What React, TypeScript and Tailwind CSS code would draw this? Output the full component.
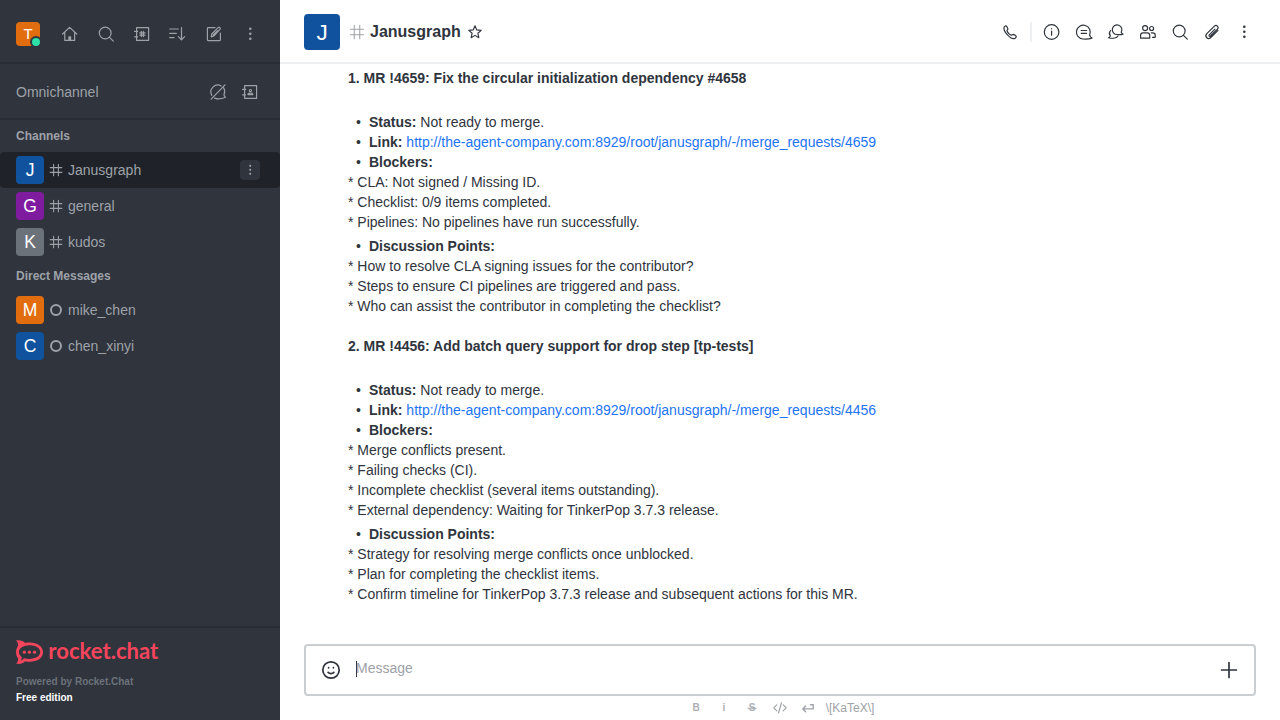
import type { ReactNode } from 'react';

type IconProps = { children: ReactNode; size?: string; sw?: number };

function Icon({ children, size = 'size-5', sw = 1.2 }: IconProps) {
  return (
    <svg viewBox="0 0 20 20" className={`${size} block shrink-0`} fill="none" stroke="currentColor" strokeWidth={sw} strokeLinecap="round" strokeLinejoin="round">
      {children}
    </svg>
  );
}

const Home = () => (
  <Icon>
    <path d="M2.6 10 9.6 3.4 16.8 10M4.8 8.2v8.2h9.8V8.2" />
    <path d="M8.9 16.2v-3.4h1.7v3.4z" fill="currentColor" />
  </Icon>
);
const Search = () => (
  <Icon>
    <circle cx="9.2" cy="9" r="5.9" />
    <path d="m13.5 13.3 3.8 3.8" />
  </Icon>
);
const Directory = () => (
  <Icon>
    <path d="M4.6 3.6h12v12.8h-12zM2.6 7.4h3M2.6 12.8h3" />
    <path d="M9.3 7.400v5.200M11.400 7.400v5.200M7.800 8.900h5.200M7.800 11.100h5.200" />
  </Icon>
);
const Sort = () => (
  <Icon>
    <path d="M1.7 5h8.6M1.7 9.4h6.6M1.7 13.6h4.4M13.5 3.6v12M10.4 12.7l3.1 3.1 3.1-3.1" />
  </Icon>
);
const Edit = () => (
  <Icon>
    <path d="M11 3.6H4.2a.8.8 0 0 0-.8.8v11.4c0 .4.4.8.8.8h11.4c.4 0 .8-.4.8-.8V9.2" />
    <path d="m7.2 12.9.6-2.9 6.3-6.3c.6-.6 1.3-.6 1.8-.1s.5 1.2 0 1.8L9.8 12zM9.2 11l4.4-4.4" />
  </Icon>
);
const Kebab = ({ size = 'size-5' }: { size?: string }) => (
  <svg viewBox="0 0 20 20" className={`${size} block shrink-0`} fill="currentColor">
    <circle cx="10.3" cy="4.8" r="1.3" />
    <circle cx="10.3" cy="9.8" r="1.3" />
    <circle cx="10.3" cy="14.8" r="1.3" />
  </svg>
);
const ChatOff = () => (
  <Icon>
    <path d="M13.200 4A6.900 6.900 0 0 0 3.800 13.400M15.600 5.800c1.400 2.200 1.400 4.600.4 7 .2 1.100.7 1.800 1.500 2.400-3.500 1.700-7.700 2.200-10.900.900M3.200 17.200 17 2.800" />
  </Icon>
);
const Contacts = () => (
  <Icon>
    <path d="M4.600 3.600h12v12.800h-12zM2.600 7.400h3M2.600 12.800h3" />
    <circle cx="10.400" cy="8.600" r="1.100" />
    <path d="M8 12.600v-.7c.4-1.100 4.400-1.100 4.800 0v.7z" />
  </Icon>
);
const Hash = ({ size, sw }: { size: string; sw: number }) => (
  <svg viewBox="0 0 14 14" className={`${size} block shrink-0`} fill="none" stroke="currentColor" strokeWidth={sw} strokeLinecap="round">
    <path d="M4.600 1.200v11.600M9.400 1.200v11.600M1.200 4.600h11.600M1.200 9.400h11.600" />
  </svg>
);
const Star = () => (
  <Icon size="size-4" sw={1.4}>
    <path d="m10 2.3 2.2 5.100 5.600.5-4.200 3.700 1.200 5.500-4.800-2.900-4.800 2.900 1.200-5.500-4.200-3.700 5.600-.5z" />
  </Icon>
);
const Phone = () => (
  <Icon>
    <path d="M4.100 5.100c.5-.8 1.400-1.500 2.100-1.200.8.500 1.400 1.800 1.700 2.900.2.800-.9 1.300-.9 1.900.3 1.600 2.600 4 4.200 4.500.7.100 1.300-1 2.100-.8 1.200.4 2.500 1.200 2.900 1.900.3.800-.8 2-1.700 2.300C10.400 17.500 2.800 9 4.100 5.100z" />
  </Icon>
);
const Info = () => (
  <Icon>
    <circle cx="9.600" cy="10" r="7.300" />
    <path d="M9.600 9v4.200M9.600 6.600v.2" />
  </Icon>
);
const Discussion = () => (
  <Icon>
    <path d="M15.600 13A6.900 6.900 0 1 0 9 17c3 .3 6.100.1 9-.9-1.200-.6-2-1.700-2.400-3.100zM7.200 8.500h5.400M7.200 11.300h5.400" />
  </Icon>
);
const Threads = () => (
  <Icon>
    <path d="M15.200 10.200a4.800 4.800 0 1 0-4.100 2.300c2 .3 4 .2 5.900-.4-.9-.4-1.500-1-1.800-1.900z" />
    <path d="M4.500 8.600c-1.300 1.600-1.300 3.800-.2 5.300-.4.900-.9 1.400-1.700 1.800 2.200.7 4.200.7 6.100.3 1.600-.3 2.700-1 3.300-2" />
  </Icon>
);
const Team = () => (
  <Icon>
    <circle cx="7.100" cy="6.100" r="2.500" />
    <circle cx="13.600" cy="6.500" r="2" />
    <path d="M2.600 16.200v-3c0-1.500.9-2.400 2.400-2.400h4.300c1.500 0 2.400.9 2.400 2.400v3zM13.300 10.800h1.400c1.400 0 2.500.9 2.500 2.200v2.300h-2.700" />
  </Icon>
);
const Clip = () => (
  <Icon>
    <path d="m12.900 7.200-5.600 5.600c-.9 1 .3 2.100 1.200 1.200l6.900-6.900c2-2.200-1-4.900-3-3L4.800 11.700c-2.600 2.900 1.200 6.500 4 3.800l7.200-7.200" />
  </Icon>
);
const Smile = () => (
  <Icon sw={1.700}>
    <circle cx="10" cy="10" r="8.200" />
    <path d="M7.600 7.700v.1M12.400 7.700v.1M7.100 12.400c1.500 1.600 4.300 1.600 5.800 0" />
  </Icon>
);
const Plus = () => (
  <Icon sw={1.700}>
    <path d="M10 2.600v14.800M2.600 10h14.800" />
  </Icon>
);

const tones = {
  blue: 'bg-[#10529e]',
  purple: 'bg-[#7f1b9f]',
  gray: 'bg-[#6c727a]',
  orange: 'bg-[#e26d0e]',
};

function Row({ letter, tone, name, kind, active }: { letter: string; tone: keyof typeof tones; name: string; kind: 'channel' | 'user'; active?: boolean }) {
  return (
    <li className={`flex h-9 items-center px-4 ${active ? 'rounded-sm bg-[#1f2329]' : ''}`}>
      <span className={`flex size-7 items-center justify-center rounded-sm text-[17.5px] leading-7 text-white ${tones[tone]}`}>{letter}</span>
      <span className="flex w-6 justify-center">
        {kind === 'channel' ? <Hash size="size-3.5" sw={1.100} /> : <span className="size-3 rounded-full border-2 border-[#9ea2a8]" />}
      </span>
      <span className="flex-1">{name}</span>
      {active && (
        <span className="mr-1 flex size-5 items-center justify-center rounded bg-[#2f343d]">
          <Kebab size="size-4" />
        </span>
      )}
    </li>
  );
}

function Logo() {
  return (
    <svg viewBox="0 -5 148 34" className="-mt-[5px] block h-[34px] w-[148px]" fill="#f5455c">
      <path fillRule="evenodd" d="M0 .6C3.200-.4 6.800.4 9.200 3 18.500 1 27 5.200 27 12.200S18.500 23.200 9.200 21.200C6.800 23.700 3.200 24.600 0 23.600c1.700-1.500 2.400-3.300 2-5.300C-.6 14.700-.6 9.700 2 6.100 2.400 4 1.700 2.200 0 .6zM13.800 5.200C7.200 5.200 2.900 8.300 2.900 12.100c0 2 1.200 3.600 2.900 4.800.1 1.400-.3 2.500-1 3.500 1.200-.3 2.200-1.100 3.200-2.200 8.500 2.200 16.200-1 16.200-6.100 0-3.800-4-6.900-10.400-6.900z" />
      <circle cx="8.300" cy="12.200" r="1.600" />
      <circle cx="13.400" cy="12.200" r="1.600" />
      <circle cx="18.500" cy="12.200" r="1.600" />
      <text x="32.300" y="19" fontFamily="Lato, sans-serif" fontWeight="700" fontSize="22" textLength="110" lengthAdjust="spacingAndGlyphs">rocket.chat</text>
    </svg>
  );
}

function Bullet({ label, children }: { label: string; children?: ReactNode }) {
  return (
    <li className="flex">
      <span className="w-[21px] pl-2">•</span>
      <span><b>{label}</b> {children}</span>
    </li>
  );
}

function MergeRequest({ title, id, blockers, points }: { title: string; id: string; blockers: string[]; points: string[] }) {
  return (
    <section>
      <p className="font-bold">{title}</p>
      <ul className="mt-6">
        <Bullet label="Status:">Not ready to merge.</Bullet>
        <Bullet label="Link:">
          <a className="text-[#1d74f5]">http://the-agent-company.com:8929/root/janusgraph/-/merge_requests/{id}</a>
        </Bullet>
        <Bullet label="Blockers:" />
      </ul>
      {blockers.map((b) => <p key={b}>* {b}</p>)}
      <ul className="mt-1">
        <Bullet label="Discussion Points:" />
      </ul>
      {points.map((p) => <p key={p}>* {p}</p>)}
    </section>
  );
}

function FormatLetter({ letter, strike }: { letter: string; strike?: boolean }) {
  return (
    <Icon sw={1}>
      <text x="10" y="13.400" textAnchor="middle" fontSize="10" stroke="none" fill="currentColor" fontWeight="700" opacity="0.85">{letter}</text>
      {strike && <path d="M5.800 10.200h8.400" />}
    </Icon>
  );
}

export default function App() {
  return (
    <div className="flex h-[720px] w-[1280px] overflow-hidden bg-white font-['Liberation_Sans',sans-serif] text-sm leading-5 text-[#2f343d]">
      <aside className="flex w-70 shrink-0 flex-col bg-[#2f343d] text-[#9ea2a8]">
        <div className="flex h-16 items-center gap-4 border-b-2 border-[#282c34] pt-1.5 pr-5 pl-4">
          <div className="relative mr-1 flex size-6 items-center justify-center rounded-sm bg-[#e26d0e] text-[15px] text-white">
            T
            <span className="absolute -right-[2px] -bottom-[2px] size-3 rounded-full border-2 border-[#2f343d] bg-[#2de0a5]" />
          </div>
          <Home />
          <Search />
          <Directory />
          <Sort />
          <Edit />
          <Kebab />
        </div>
        <div className="flex h-14 items-center gap-3 border-b-2 border-[#282c34] pt-0.5 pr-5 pl-4">
          <span className="flex-1">Omnichannel</span>
          <ChatOff />
          <Contacts />
        </div>
        <nav className="flex-1">
          <h2 className="flex h-8 items-center px-4 text-xs font-bold">Channels</h2>
          <ul>
            <Row letter="J" tone="blue" name="Janusgraph" kind="channel" active />
            <Row letter="G" tone="purple" name="general" kind="channel" />
            <Row letter="K" tone="gray" name="kudos" kind="channel" />
          </ul>
          <h2 className="flex h-8 items-center px-4 text-xs font-bold">Direct Messages</h2>
          <ul>
            <Row letter="M" tone="orange" name="mike_chen" kind="user" />
            <Row letter="C" tone="blue" name="chen_xinyi" kind="user" />
          </ul>
        </nav>
        <footer className="h-[94px] border-t-2 border-[#282c34] px-4 pt-3 text-[10px] leading-4 font-bold">
          <Logo />
          <p className="mt-[5px] text-[#6c727a]">Powered by Rocket.Chat</p>
          <p className="text-white">Free edition</p>
        </footer>
      </aside>

      <main className="flex min-w-0 flex-1 flex-col">
        <header className="flex h-16 shrink-0 items-center border-b-2 border-[#eeeff1] px-6 pt-0.5">
          <span className="flex size-9 items-center justify-center rounded-sm bg-[#10529e] pt-0.5 text-[22.5px] text-white">J</span>
          <span className="ml-2 flex w-[22px] pl-px text-[#9ea2a8]"><Hash size="size-4" sw={0.900} /></span>
          <h1 className="text-base font-bold">Janusgraph</h1>
          <span className="ml-1.5"><Star /></span>
          <div className="ml-auto flex items-center gap-3 pr-0.5">
            <Phone />
            <span className="-mx-0.5 h-5 w-0.5 bg-[#eeeff1]" />
            <Info />
            <Discussion />
            <Threads />
            <Team />
            <Search />
            <Clip />
            <Kebab />
          </div>
        </header>

        <div className="flex-1 overflow-hidden pt-1 pl-[68px]">
          <MergeRequest
            title="1. MR !4659: Fix the circular initialization dependency #4658"
            id="4659"
            blockers={['CLA: Not signed / Missing ID.', 'Checklist: 0/9 items completed.', 'Pipelines: No pipelines have run successfully.']}
            points={['How to resolve CLA signing issues for the contributor?', 'Steps to ensure CI pipelines are triggered and pass.', 'Who can assist the contributor in completing the checklist?']}
          />
          <div className="h-5" />
          <MergeRequest
            title="2. MR !4456: Add batch query support for drop step [tp-tests]"
            id="4456"
            blockers={['Merge conflicts present.', 'Failing checks (CI).', 'Incomplete checklist (several items outstanding).', 'External dependency: Waiting for TinkerPop 3.7.3 release.']}
            points={['Strategy for resolving merge conflicts once unblocked.', 'Plan for completing the checklist items.', 'Confirm timeline for TinkerPop 3.7.3 release and subsequent actions for this MR.']}
          />
        </div>

        <div className="px-6">
          <div className="flex h-13 items-center rounded border-2 border-[#cbced1] pr-[15px] pl-[15px]">
            <Smile />
            <span className="-mr-px mb-0.5 ml-[15px] h-4 w-px bg-[#2f343d]" />
            <span className="mb-1 flex-1 text-[#9ea2a8]">Message</span>
            <Plus />
          </div>
        </div>
        <div className="flex h-6 items-center justify-center gap-2 text-xs text-[#9ea2a8]">
          <FormatLetter letter="B" />
          <FormatLetter letter="i" />
          <FormatLetter letter="S" strike />
          <Icon>
            <path d="M6.800 6.800 3.800 9.800l3 3M13.200 6.800l3 3-3 3M11.400 4.800 8.600 14.800" />
          </Icon>
          <Icon sw={1.400}>
            <path d="M15.200 6.700v4.200H4.800M7.600 8.100l-2.800 2.800 2.800 2.800M12.500 6.700h2.700" />
          </Icon>
          <span>\[KaTeX\]</span>
        </div>
      </main>
    </div>
  );
}
